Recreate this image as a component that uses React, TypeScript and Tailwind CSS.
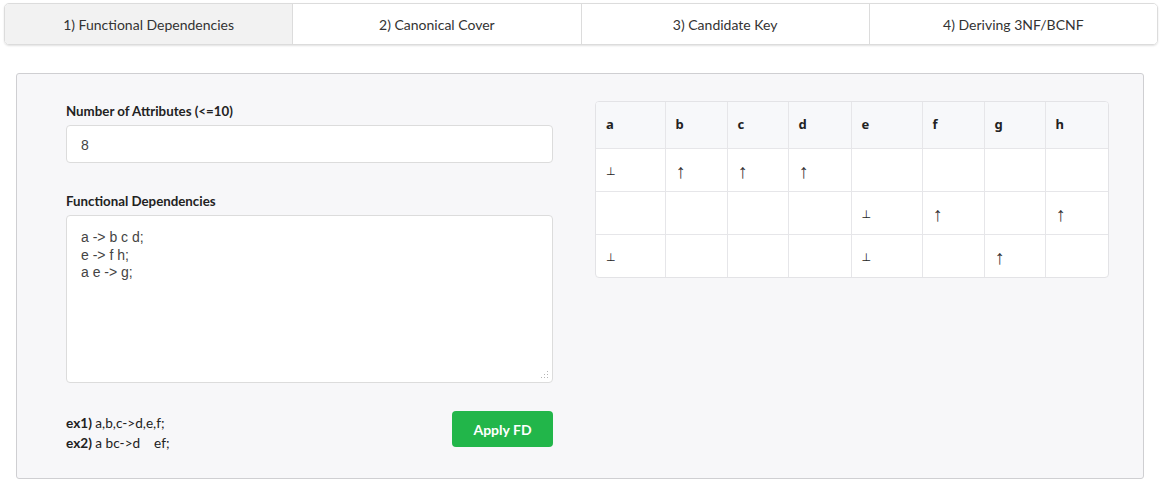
import React from "react";

const tabs = [
  "1) Functional Dependencies",
  "2) Canonical Cover",
  "3) Candidate Key",
  "4) Deriving 3NF/BCNF",
];

const cols = ["a", "b", "c", "d", "e", "f", "g", "h"];
const colW = [
  "w-[69px]",
  "w-[62px]",
  "w-[61px]",
  "w-[63px]",
  "w-[71px]",
  "w-[62px]",
  "w-[61px]",
  "w-[63px]",
];

const rows: string[][] = [
  ["⊥", "↑", "↑", "↑", "", "", "", ""],
  ["", "", "", "", "⊥", "↑", "", "↑"],
  ["⊥", "", "", "", "⊥", "", "↑", ""],
];

function Glyph({ v }: { v: string }) {
  if (v === "↑")
    return (
      <span className="font-['Liberation_Sans',sans-serif] text-[20px] text-[#333] relative top-[2px]">
        ↑
      </span>
    );
  if (v === "⊥")
    return (
      <span className="font-['DejaVu_Sans',sans-serif] text-[11px] text-[#222] relative top-[1px]">
        ⊥
      </span>
    );
  return null;
}

export default function App() {
  return (
    <div className="w-[1162px] h-[483px] bg-white font-['Lato','Noto_Sans',sans-serif] text-[#333] overflow-hidden">
      <div className="pt-[3px] px-[4px]">
        <div className="flex h-[42px] border border-[#dcdcdc] rounded-[5px] shadow-[0_1px_2px_rgba(0,0,0,0.12)] overflow-hidden">
          {tabs.map((t, i) => (
            <div
              key={t}
              className={
                i === 0
                  ? "flex-1 flex items-center justify-center text-[14px] bg-[#f2f2f2] border-r border-[#dcdcdc]"
                  : i === 3
                  ? "flex-1 flex items-center justify-center text-[14px] bg-white"
                  : "flex-1 flex items-center justify-center text-[14px] bg-white border-r border-[#dcdcdc]"
              }
            >
              {t}
            </div>
          ))}
        </div>
      </div>

      <div className="mt-[28px] ml-[16px] w-[1128px] h-[406px] border border-[#cfcfd2] rounded-[3px] bg-[#f7f7f9] flex pl-[49px]">
        <div className="w-[487px] shrink-0 pt-[28px] flex flex-col">
          <label className="block text-[13.3px] font-bold leading-[19px] h-[19px] text-[#222]">
            Number of Attributes (&lt;=10)
          </label>
          <div className="mt-[4px] h-[38px] bg-white border border-[#dcdcdc] rounded-[4px] flex items-center pl-[14px] pt-[2px] font-['Liberation_Sans',Arial,sans-serif] text-[14px] text-[#444]">
            8
          </div>
          <label className="block mt-[29px] text-[13.3px] font-bold leading-[19px] h-[19px] text-[#222]">
            Functional Dependencies
          </label>
          <div className="mt-[4px] h-[168px] bg-white border border-[#dcdcdc] rounded-[4px] pl-[14px] pt-[13px] font-['Liberation_Sans',Arial,sans-serif] text-[14px] leading-[17.5px] text-[#444] relative">
            <div>a -&gt; b c d;</div>
            <div>e -&gt; f h;</div>
            <div>a e -&gt; g;</div>
            <svg
              className="absolute right-[3px] bottom-[3px]"
              width="9"
              height="9"
              viewBox="0 0 9 9"
            >
              <g fill="#b5b5b5">
                <rect x="7" y="1" width="1" height="1" />
                <rect x="4" y="4" width="1" height="1" />
                <rect x="7" y="4" width="1" height="1" />
                <rect x="1" y="7" width="1" height="1" />
                <rect x="4" y="7" width="1" height="1" />
                <rect x="7" y="7" width="1" height="1" />
              </g>
            </svg>
          </div>
          <div className="mt-[28px] flex justify-between items-start">
            <div className="pt-[2px] text-[13.6px] leading-[20px] text-[#222]">
              <div>
                <span className="font-bold">ex1)</span> a,b,c-&gt;d,e,f;
              </div>
              <div>
                <span className="font-bold">ex2)</span> a bc-&gt;d&nbsp;&nbsp;&nbsp;&nbsp;ef;
              </div>
            </div>
            <button className="w-[101px] h-[36px] rounded-[4px] bg-[#22b64a] text-white font-bold text-[14px]">
              Apply FD
            </button>
          </div>
        </div>

        <div className="ml-[42px] shrink-0 pt-[27px]">
          <div className="border border-[#e3e3e6] rounded-[4px] overflow-hidden bg-white">
            <table className="border-collapse table-fixed w-[511px]">
              <thead>
                <tr className="h-[46px] bg-[#f7f8fa]">
                  {cols.map((c, i) => (
                    <th
                      key={c}
                      className={`${colW[i]} text-left pl-[10px] text-[13px] font-bold text-[#222] font-['Noto_Sans','Open_Sans',sans-serif] ${
                        i < 7 ? "border-r border-[#e6e6e9]" : ""
                      }`}
                    >
                      {c}
                    </th>
                  ))}
                </tr>
              </thead>
              <tbody>
                {rows.map((r, ri) => (
                  <tr key={ri} className="h-[43px] border-t border-[#e6e6e9]">
                    {r.map((v, ci) => (
                      <td
                        key={ci}
                        className={`pl-[10px] leading-[20px] ${
                          ci < 7 ? "border-r border-[#e6e6e9]" : ""
                        }`}
                      >
                        <Glyph v={v} />
                      </td>
                    ))}
                  </tr>
                ))}
              </tbody>
            </table>
          </div>
        </div>
      </div>
    </div>
  );
}
